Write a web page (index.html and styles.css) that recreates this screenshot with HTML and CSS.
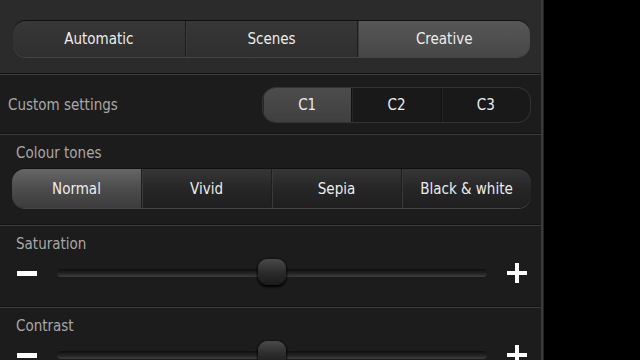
FILE: index.html
```html
<!DOCTYPE html>
<html lang="en">
<head>
  <meta charset="UTF-8">
  <title>Camera settings</title>
  <link rel="stylesheet" href="styles.css">
</head>
<body>
  <div class="panel">
    <div class="mode-bar">
      <div class="segments segments-top">
        <div class="seg">Automatic</div>
        <div class="seg">Scenes</div>
        <div class="seg active">Creative</div>
      </div>
    </div>

    <div class="row custom-row">
      <span class="custom-label">Custom settings</span>
      <div class="segments segments-custom">
        <div class="seg active">C1</div>
        <div class="seg">C2</div>
        <div class="seg">C3</div>
      </div>
    </div>

    <div class="row tones-row">
      <div class="label">Colour tones</div>
      <div class="segments segments-tones">
        <div class="seg active">Normal</div>
        <div class="seg">Vivid</div>
        <div class="seg">Sepia</div>
        <div class="seg">Black &amp; white</div>
      </div>
    </div>

    <div class="row slider-row">
      <div class="label">Saturation</div>
      <div class="slider">
        <span class="minus"></span>
        <div class="track"><span class="thumb" style="left: 201px"></span></div>
        <span class="plus"></span>
      </div>
    </div>

    <div class="row slider-row">
      <div class="label">Contrast</div>
      <div class="slider">
        <span class="minus"></span>
        <div class="track"><span class="thumb" style="left: 201px"></span></div>
        <span class="plus"></span>
      </div>
    </div>
  </div>
</body>
</html>
```

FILE: styles.css
```css
body {
  margin: 0;
  background-color: #000;
  font-family: "DejaVu Sans", sans-serif;
  font-stretch: condensed;
  width: 640px;
  height: 360px;
  overflow: hidden;
}

.panel {
  width: 541px;
  height: 360px;
  background-color: #1c1c1c;
  border-right: 2px solid #3a3a3a;
  box-shadow: 1px 0 0 #222;
  overflow: hidden;
}

.mode-bar {
  height: 74px;
  box-sizing: border-box;
  padding: 21px 11px 0 13px;
  background-color: #2b2b2b;
  border-bottom: 1px solid #111;
}

.row {
  border-top: 1px solid #3c3c3c;
  border-bottom: 1px solid #111;
  box-sizing: border-box;
}

.segments {
  display: flex;
  border-radius: 13px;
  overflow: hidden;
  box-shadow: 0 -1px 0 #111, 0 1px 0 #444;
}

.seg {
  flex: 1;
  display: flex;
  align-items: center;
  justify-content: center;
  color: #ececec;
  font-size: 15px;
  border-left: 1px solid #1e1e1e;
  box-shadow: inset 1px 0 0 #3a3a3a;
}

.seg:first-child {
  border-left: none;
  box-shadow: none;
}

.segments-top {
  height: 36px;
  background: linear-gradient(#373737, #2f2f2f);
}

.segments-top .seg.active {
  background: linear-gradient(#575757, #474747);
}

.custom-row {
  height: 60px;
  display: flex;
  align-items: center;
  justify-content: space-between;
  padding: 1px 11px 0 8px;
}

.custom-label {
  color: #a8a8a8;
  font-size: 15px;
}

.segments-custom {
  width: 267px;
  height: 34px;
  background-color: #191919;
  box-shadow: 0 0 0 1px #333;
}

.segments-custom .seg {
  border-left-color: #111;
  box-shadow: inset 1px 0 0 #262626;
}

.segments-custom .seg.active {
  background: linear-gradient(#4c4c4c, #404040);
}

.tones-row {
  height: 91px;
  padding: 9px 10px 0 12px;
}

.label {
  color: #a8a8a8;
  font-size: 15px;
  line-height: 18px;
  padding-left: 4px;
}

.segments-tones {
  height: 39px;
  margin-top: 7px;
  background: linear-gradient(#363636, #262626 50%, #1f1f1f);
}

.segments-tones .seg.active {
  background: linear-gradient(#666, #4c4c4c 50%, #3c3c3c);
}

.slider-row {
  height: 82px;
  padding: 9px 12px 0 12px;
}

.slider {
  display: flex;
  align-items: center;
  height: 30px;
  margin-top: 5px;
}

.minus {
  width: 20px;
  height: 5px;
  margin-left: 5px;
  background-color: #fff;
}

.plus {
  position: relative;
  width: 20px;
  height: 20px;
}

.plus::before,
.plus::after {
  content: "";
  position: absolute;
  background-color: #fff;
}

.plus::before {
  left: 0;
  top: 8px;
  width: 20px;
  height: 4px;
}

.plus::after {
  left: 8px;
  top: 0;
  width: 4px;
  height: 20px;
}

.track {
  position: relative;
  width: 430px;
  height: 8px;
  margin: 0 20px;
  border-radius: 4px;
  background: linear-gradient(#0e0e0e, #262626 60%, #3e3e3e);
}

.thumb {
  position: absolute;
  top: -10px;
  width: 28px;
  height: 26px;
  border-radius: 9px;
  background: linear-gradient(#4a4a4a, #2c2c2c 50%, #1a1a1a);
  box-shadow: 0 0 2px #000, 0 2px 3px #000;
}
```
